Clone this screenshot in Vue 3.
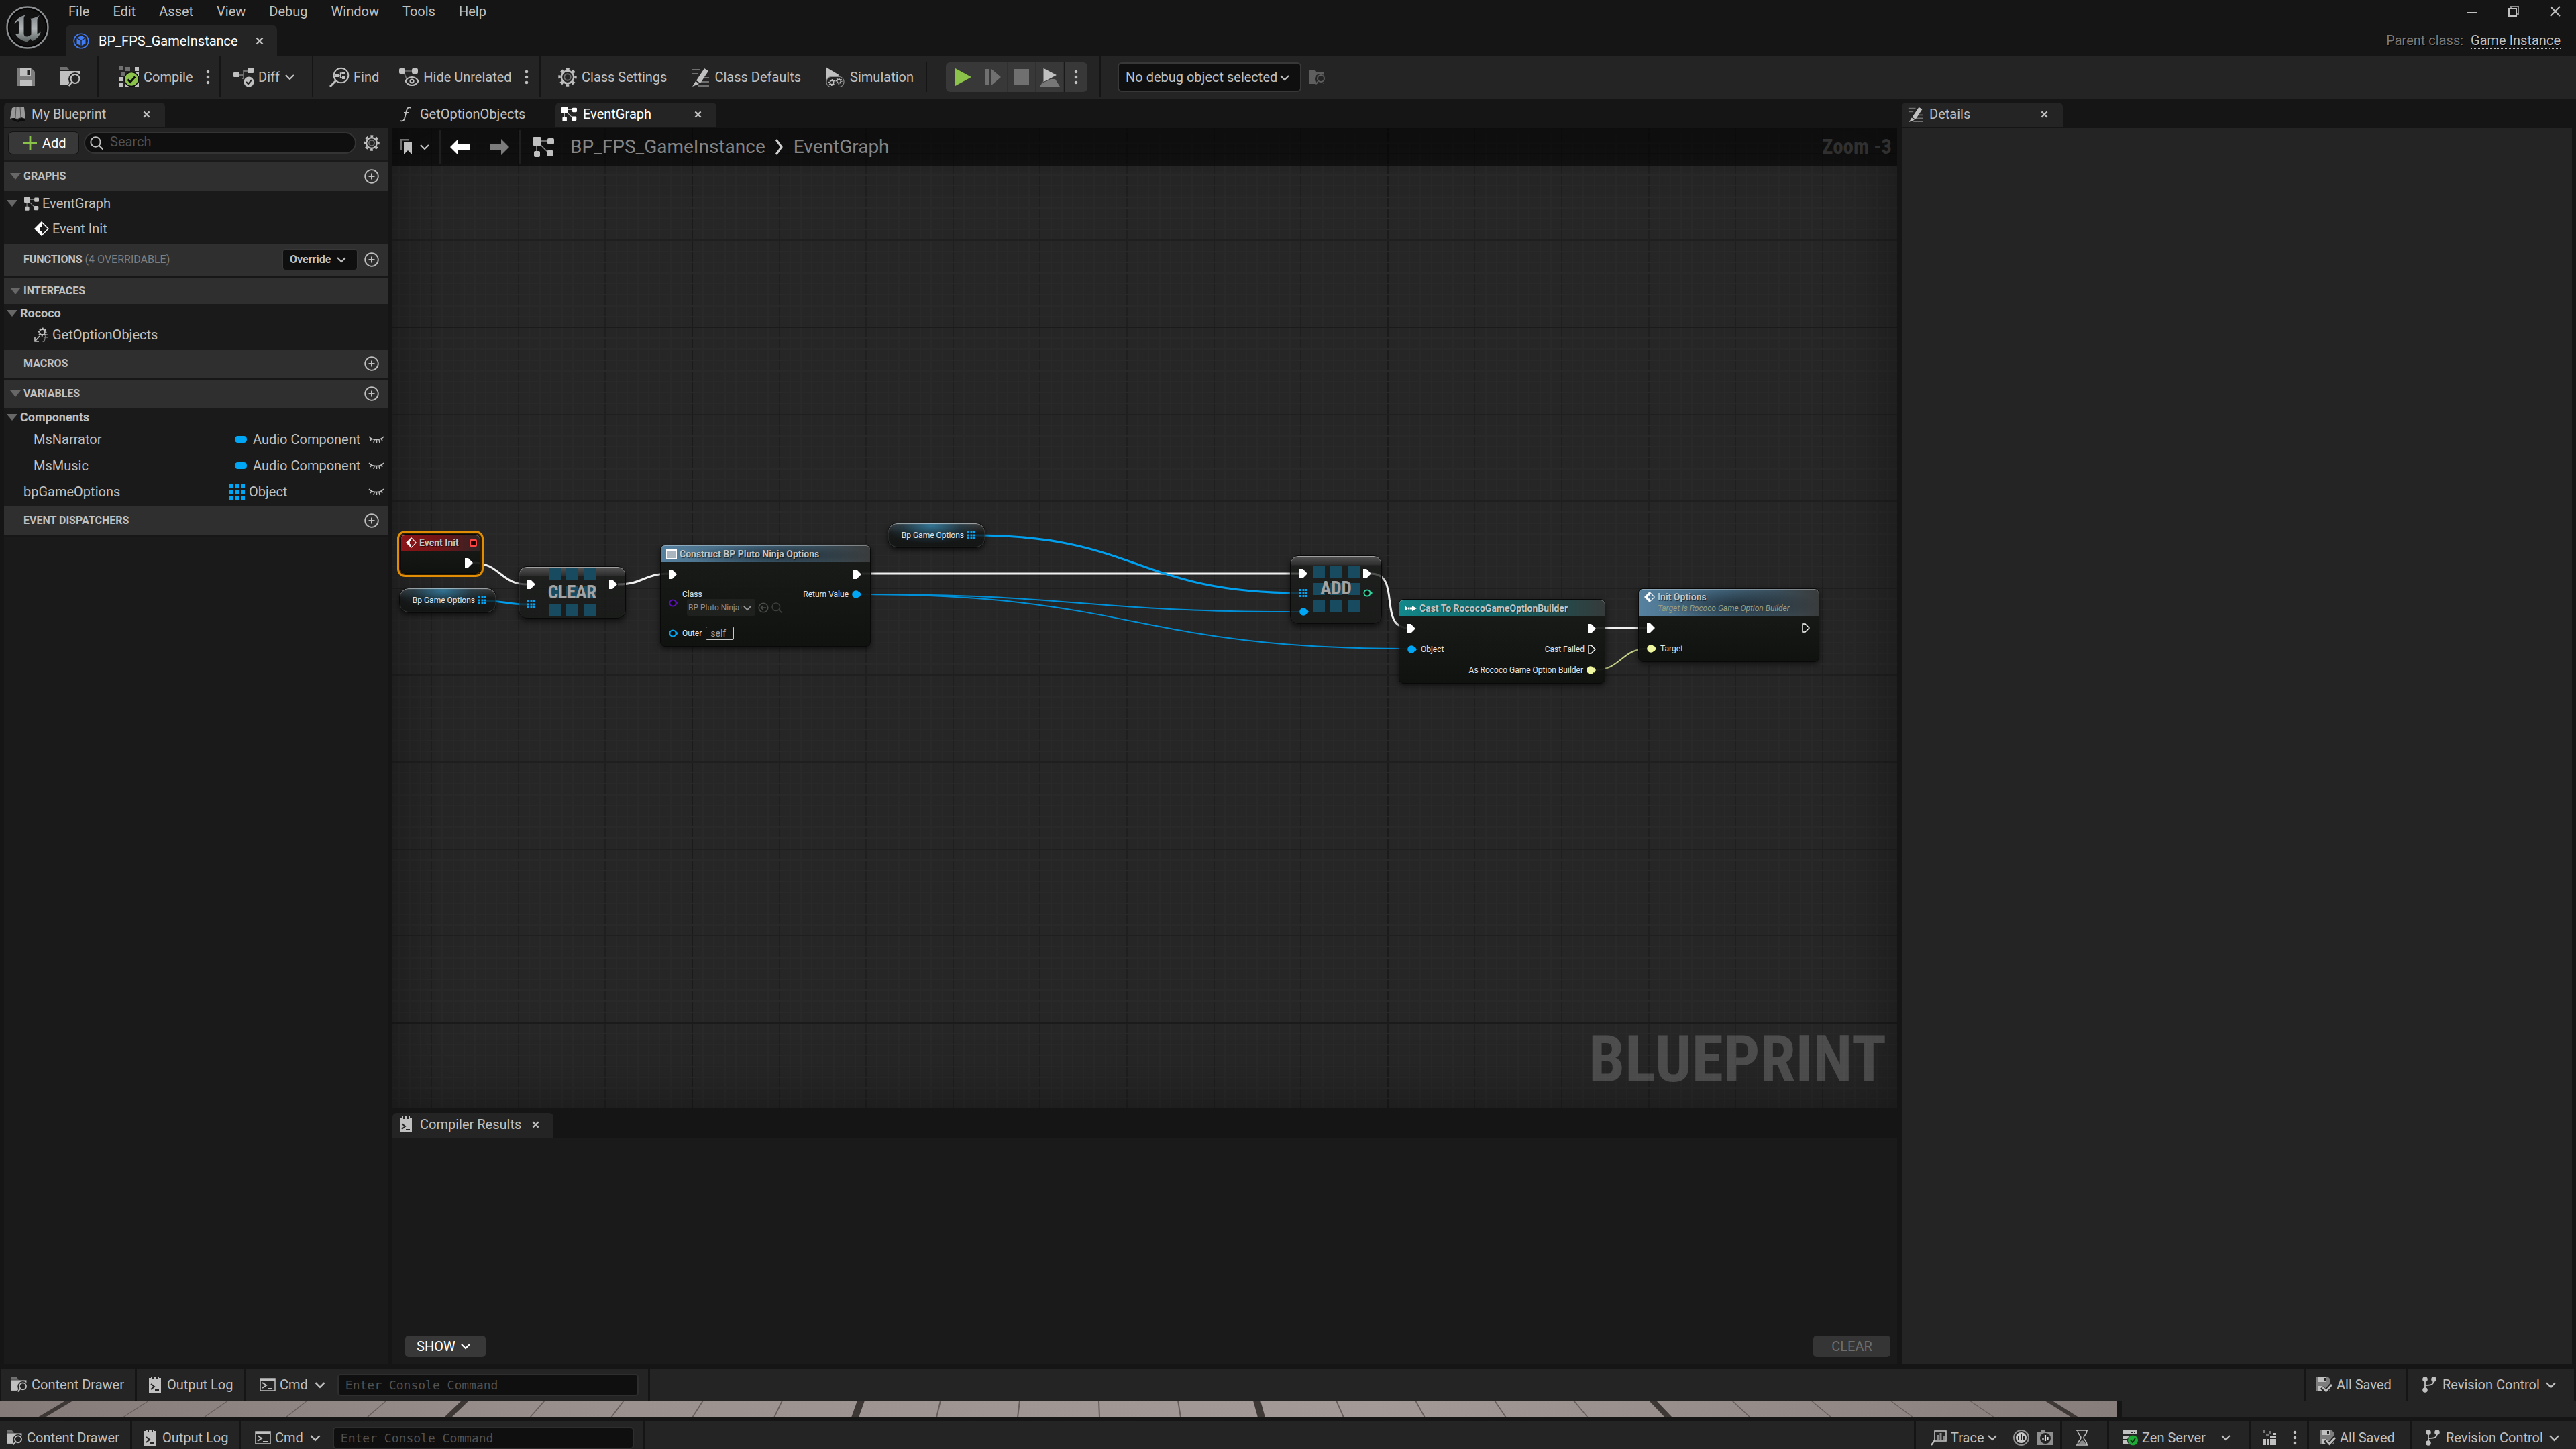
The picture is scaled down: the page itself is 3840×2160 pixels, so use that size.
<script setup>
import { h, ref } from 'vue'

const L = '#c0c0c0'
const D = '#707070'

const gearRing = (cx, cy, r, w, color) => {
  const step = (2 * Math.PI * r) / 16
  return `<circle cx="${cx}" cy="${cy}" r="${r}" fill="none" stroke="${color}" stroke-width="${w}" stroke-dasharray="${step} ${step}" stroke-dashoffset="${step / 2}"/>`
}

// Each entry: [width, height, markup]
const icons = {
  logo: [64, 64, `<defs><linearGradient id="lg" x1="0" y1="0" x2="0" y2="1"><stop offset="0" stop-color="#7d8488"/><stop offset=".5" stop-color="#b0b4b6"/><stop offset="1" stop-color="#59605f"/></linearGradient></defs><circle cx="32" cy="32" r="30.5" fill="#121212" stroke="#8d9193" stroke-width="2.4"/><circle cx="32" cy="32" r="28" fill="none" stroke="#050505" stroke-width="2"/><path fill="url(#lg)" d="M12.5 27C15 20 20 15.5 29.5 13.5C27.5 14.8 26.5 16.5 26.5 19V41C26.5 44 28.5 45.5 31 45.5C33.5 45.5 36 44 37.5 42.5V22C37.5 20.5 37 19.8 35.5 19C40 18.5 45 17 50 14C47.5 17 46.5 19 46.5 22.5V41C48 41 50 40 52 37.5C50 45 46 49 39.5 52L36.5 49L31.5 53.5C24 52 17 47.5 14 41.5C16.5 42.5 19 42 19 39.5V24.5C19 22 16.5 22.5 12.5 27Z"/>`],
  cube: [24, 24, `<circle cx="12" cy="12" r="10.8" fill="none" stroke="#3f7cf5" stroke-width="1.6"/><path fill="#3f7cf5" d="M12 4l6 3.2-6 3.2-6-3.2zM5.5 8.3l5.8 3.1v7.6l-5.8-3.2zM18.5 8.3l-5.8 3.1v7.6l5.8-3.2z"/>`],
  close: [12, 12, `<path d="M1.5 1.5l9 9M10.5 1.5l-9 9" stroke="${L}" stroke-width="2.4"/>`],
  winMin: [16, 16, `<path d="M1 10h14" stroke="${L}" stroke-width="2"/>`],
  winMax: [16, 16, `<path d="M4 3V1h11v11h-3" stroke="#8f8f8f" stroke-width="2" fill="none"/><rect x="1" y="4" width="11" height="11" fill="none" stroke="${L}" stroke-width="2"/>`],
  winClose: [16, 16, `<path d="M1 1l14 14M15 1L1 15" stroke="${L}" stroke-width="2"/>`],
  save: [28, 28, `<path d="M1 1h21l5 5v21H1z" fill="#7d7d7d"/><path d="M5 1h16v12H5zM5 18h18v9H5z" fill="${L}"/><path d="M15.5 3h4v8h-4z" fill="#242424"/>`],
  browse: [31, 31, `<path d="M0 6V1h10l4 5z" fill="${D}"/><path d="M0 7h29v20H0z" fill="${L}"/><circle cx="22" cy="19" r="10" fill="#242424"/><path d="M14 24l-6 7h23V12z" fill="#242424"/><circle cx="22" cy="18.5" r="6.5" fill="none" stroke="${L}" stroke-width="2.2"/><path d="M17.5 23l-5 6" stroke="${L}" stroke-width="2.6"/>`],
  browseDim: [24, 24, `<path d="M0 1h8l3 4h11v17H0z" fill="#5e5e5e"/><circle cx="17" cy="15" r="8" fill="#242424"/><circle cx="18" cy="14" r="5" fill="none" stroke="#5e5e5e" stroke-width="2"/><path d="M14 18l-4 5" stroke="#5e5e5e" stroke-width="2"/>`],
  compile: [31, 31, `<path fill="${D}" d="M0 0h6v6H0zM10 1h7v6h-7zM3 9h6v6H3zM12 9h6v6h-6z"/><path fill="${L}" d="M24 1h6v6h-6zM24 9h6v6h-6zM1 16h6v6H1zM1 24h6v6H1zM9 24h7v6H9zM24 24h6v6h-6z"/><circle cx="19" cy="19" r="10.5" fill="#8bc34a" stroke="#0c0c0c" stroke-width="1.4"/><path d="M13.5 19.5l3.8 4 7-8" fill="none" stroke="#0c0c0c" stroke-width="2.8"/>`],
  dots: [6, 24, `<circle cx="3" cy="4" r="2.3" fill="${L}"/><circle cx="3" cy="12" r="2.3" fill="${L}"/><circle cx="3" cy="20" r="2.3" fill="${L}"/>`],
  chevron: [14, 10, `<path d="M1 2l6 6 6-6" fill="none" stroke="currentColor" stroke-width="2.2"/>`],
  diff: [31, 30, `<path d="M9 12h6V6h8M15 10v7h-2" fill="none" stroke="${D}" stroke-width="1.8"/><rect x="0" y="8" width="9" height="7" rx="1" fill="${L}"/><rect x="21" y="1" width="9" height="8" rx="1" fill="${L}"/><circle cx="23" cy="22" r="7.6" fill="${L}"/><path d="M19 22l3 3.2 5-6" fill="none" stroke="#242424" stroke-width="2.2"/>`],
  find: [30, 30, `<circle cx="17.5" cy="12.5" r="10.8" fill="none" stroke="${L}" stroke-width="2"/><path d="M9.5 20.5L1 29" stroke="${L}" stroke-width="3"/><path fill="${L}" d="M9 11h5v4H9zM19 7h5v4h-5zM19 14h5v4h-5z"/><path d="M14 13h2M19 9h-2.5v7H19" stroke="${L}" fill="none" stroke-width="1.4"/>`],
  hide: [30, 30, `<path d="M8 6h13M7 8l6 14" stroke="${D}" stroke-width="1.6"/><rect x="0" y="2" width="9" height="8" rx="2" fill="${L}"/><rect x="19" y="2" width="9" height="8" rx="2" fill="${L}"/><path d="M9.5 21c4-8 15-8 19 0c-4 8-15 8-19 0z" fill="#242424" stroke="${L}" stroke-width="2"/><circle cx="19" cy="21" r="3.6" fill="${L}"/><circle cx="19" cy="21" r="1.3" fill="#242424"/>`],
  gear: [28, 28, `${gearRing(14, 14, 12, 3.4, L)}<circle cx="14" cy="14" r="9.2" fill="none" stroke="${L}" stroke-width="2.6"/><circle cx="14" cy="14" r="4.8" fill="none" stroke="${D}" stroke-width="2"/>`],
  edit: [28, 28, `<path d="M1 3h13M2 9h8M20 15h7M15 21h12M10 27h17" stroke="${D}" stroke-width="2"/><path d="M20 1l6 4-12 18-6-4zM7 20l5 4-10 4z" fill="${L}"/>`],
  sim: [30, 30, `<path d="M1 0l20 12L1 23z" fill="${L}"/><rect x="2" y="14.5" width="26" height="15" rx="7" fill="#242424" stroke="#8a8a8a" stroke-width="1.2"/>${gearRing(10, 23, 4, 2, L)}<circle cx="10" cy="23" r="2.8" fill="none" stroke="${L}" stroke-width="1.4"/>${gearRing(20.5, 21, 4, 2, L)}<circle cx="20.5" cy="21" r="2.8" fill="none" stroke="${L}" stroke-width="1.4"/>`],
  play: [24, 26, '<path d="M0 0l24 13L0 26z" fill="#8bc34a"/>'],
  step: [24, 24, `<path d="M0 0h5v24H0zM9 0l14 12L9 24z" fill="${D}"/>`],
  stop: [22, 24, `<path d="M0 0h22v24H0z" fill="${D}"/>`],
  eject: [30, 28, `<path d="M0 28l5-8h5l6-3h7l7 11z" fill="#777"/><path d="M5 0l21 11L5 22z" fill="${L}" stroke="#383838" stroke-width="1"/>`],
  book: [24, 24, '<path d="M3 3l6-2 6 1 6 0 2 17-6-2-6 2-7-1-4 1z" fill="#9a9a9a"/><path d="M9 1l-1 17M15 2l1 16" stroke="#555" stroke-width="1"/><path d="M0 19l7-1 4 4 6-4 6 2v3l-6-1-5 2-6-2z" fill="#0c0c0c"/>'],
  func: [16, 24, `<path d="M15 3c-3-2-5 0-6 4L6 19c-1 3-3 4-6 3M5 10h8" fill="none" stroke="${L}" stroke-width="1.8"/>`],
  graph: [32, 30, `<path d="M9 6h16M6 10v14M9 9l16 16" stroke="currentColor" stroke-width="1.6" opacity=".7"/><rect x="0" y="0" width="13" height="13" rx="2" fill="currentColor"/><rect x="22" y="2" width="10" height="9" rx="2" fill="currentColor"/><rect x="2" y="21" width="9" height="9" rx="2" fill="currentColor"/><rect x="21" y="20" width="10" height="9" rx="2" fill="currentColor"/>`],
  plus: [20, 20, '<path d="M10 0v20M0 10h20" stroke="#8bc34a" stroke-width="2.8"/>'],
  search: [20, 20, `<circle cx="8.5" cy="8.5" r="7.2" fill="none" stroke="currentColor" stroke-width="2"/><path d="M13.5 13.5l6 6" stroke="currentColor" stroke-width="2.2"/>`],
  marks: [18, 24, `<path d="M1 17V1h12" fill="none" stroke="${D}" stroke-width="3"/><path d="M5 4h12v19l-6-6-6 6z" fill="${L}"/>`],
  back: [29, 24, '<path d="M0 12L12 0v7h17v10H12v7z" fill="currentColor"/>'],
  fwd: [29, 24, '<path d="M29 12L17 0v7H0v10h17v7z" fill="currentColor"/>'],
  crumb: [14, 24, `<path d="M2 1l8 11-8 11" fill="none" stroke="#d0d0d0" stroke-width="3"/>`],
  add: [22, 22, `<circle cx="11" cy="11" r="9.8" fill="none" stroke="${L}" stroke-width="1.8"/><path d="M11 6.5v9M6.5 11h9" stroke="${L}" stroke-width="2"/>`],
  tri: [16, 10, '<path d="M0 0h16L8 10z" fill="#676767"/>'],
  event: [22, 22, '<path d="M11 1l10 10-10 10L1 11z" fill="none" stroke="#fff" stroke-width="1.5"/><path d="M11 1v7H8v6h3v7L1 11z" fill="#fff"/>'],
  iface: [22, 22, `${gearRing(12, 7, 5.5, 2, L)}<circle cx="12" cy="7" r="4" fill="none" stroke="${L}" stroke-width="1.8"/><path d="M8 13l-6 7M1 15v6h6" fill="none" stroke="${L}" stroke-width="1.6"/><path d="M20 11c-2-1-3 0-3.5 3l-1 5c0 2-1 3-3 2M14 15h6" fill="none" stroke="#777" stroke-width="1.3"/>`],
  pill: [18, 10, '<rect width="18" height="10" rx="4.5" fill="#00a6f6"/>'],
  array: [24, 24, '<path fill="#00a6f6" d="M0 0h6v6H0zM9 0h6v6H9zM18 0h6v6h-6zM0 9h6v6H0zM9 9h6v6H9zM18 9h6v6h-6zM0 18h6v6H0zM9 18h6v6H9zM18 18h6v6h-6z"/>'],
  eye: [24, 14, `<path d="M1 3c5 6 17 6 22 0M5 6l-2 3M9 8l-1 4M12.5 8v4M16 8l1 4M19 6l2 3" fill="none" stroke="${L}" stroke-width="1.5"/>`],
  log: [18, 24, `<path d="M0 2h3V0h2v4h2V0h4v4h2V0h2v2h3v22H0z" fill="${L}"/><path d="M3 11l5 4-5 4M9 20h6" fill="none" stroke="#242424" stroke-width="2"/>`],
  term: [24, 20, `<rect x="1" y="1" width="22" height="18" fill="none" stroke="${L}" stroke-width="1.5"/><path d="M1 1h22v3H1z" fill="${L}"/><path d="M4 7l6 4-6 4M12 16h7" fill="none" stroke="${L}" stroke-width="2"/>`],
  saved: [24, 24, `<path d="M0 0h17l4 4v18H0z" fill="#7d7d7d"/><path d="M3 0h12v8H3zM3 14h8v7H3z" fill="${L}"/><path d="M11 2h3v4h-3z" fill="#242424"/><path d="M8 16l6 6 11-13" fill="none" stroke="#242424" stroke-width="6"/><path d="M9.5 16l5 5.5L23 12" fill="none" stroke="${L}" stroke-width="2.8"/>`],
  branch: [21, 24, `<path d="M4 4v16M17 4c0 8-3 9-13 9" fill="none" stroke="${L}" stroke-width="1.8"/><circle cx="4" cy="4" r="3.8" fill="${L}"/><circle cx="17" cy="4" r="3.8" fill="${L}"/><circle cx="4" cy="20" r="3.8" fill="${L}"/>`],
  trace: [24, 24, `<rect x="5" y="2" width="17" height="15" fill="none" stroke="${L}" stroke-width="1.6"/><path d="M5 16l-5 7" stroke="${L}" stroke-width="2.2"/><path d="M8 15V8h3v7zM12.5 15V5h3v10zM17 15v-5h3v5z" fill="#8a8a8a"/>`],
  traceRec: [24, 24, '<circle cx="12" cy="12" r="11" fill="#242424" stroke="#8f8f8f" stroke-width="2"/><circle cx="12" cy="12" r="8" fill="#c8c8c8"/><path d="M8 10v5M12 7v9M16 10v5" stroke="#242424" stroke-width="2"/>'],
  traceCam: [24, 24, '<path d="M0 4h5V1h6v3h13v19H0z" fill="#8f8f8f"/><circle cx="12" cy="13" r="8" fill="#242424"/><path d="M8.5 12v4M12 8v9M15.5 11v5" stroke="#e0e0e0" stroke-width="2.2"/>'],
  glass: [18, 24, `<path d="M0 1h18M0 23h18M2 1c0 7 5 7 5 11s-5 4-5 11M16 1c0 7-5 7-5 11s5 4 5 11" fill="none" stroke="${L}" stroke-width="1.6"/><path d="M4 21c1-3 3-4 5-5 2 1 4 2 5 5z" fill="#8a8a8a"/>`],
  zen: [24, 24, `<path d="M0 1h22v6H0zM0 9h22v5H0zM0 16h22v5H0z" fill="${L}"/><path d="M13 4h2M17 4h2" stroke="#242424" stroke-width="2"/><circle cx="15.5" cy="16" r="8" fill="#1eaa36" stroke="#242424" stroke-width="1"/><path d="M12 16l3 3 4-6" fill="none" stroke="#0e2b12" stroke-width="2"/>`],
  pixels: [22, 22, `<path fill="#777" d="M0 0h4v4H0zM9 1h4v4H9zM5 6h4v3H5z"/><path fill="${L}" d="M16 4h4v3h-4zM11 9h4v3h-4zM16 9h4v3h-4zM1 13h4v4H1zM6 13h4v4H6zM11 13h4v4h-4zM16 13h4v4h-4zM1 18h4v4H1zM6 18h4v4H6zM11 18h4v4h-4zM16 18h4v4h-4z"/>`],
  exec: [12, 14, '<path d="M0 0h5l7 7-7 7H0z" fill="#fff"/>'],
  execOpen: [12, 14, '<path d="M1 1h4l6 6-6 6H1z" fill="none" stroke="#fff" stroke-width="1.4"/>'],
  obj: [14, 12, '<circle cx="6" cy="6" r="5.8" fill="currentColor"/><path d="M11 2l3 4-3 4z" fill="currentColor"/>'],
  objOpen: [14, 12, '<circle cx="6" cy="6" r="4.6" fill="#0b0d0b" stroke="currentColor" stroke-width="2"/><path d="M11 3l3 3-3 3z" fill="currentColor"/>'],
  cast: [18, 10, '<path d="M0 1l5 4-5 4zM11 1l7 4-7 4z" fill="#fff"/><path d="M5 5h6" stroke="#fff" stroke-width="3" stroke-dasharray="1.5 1"/>'],
  page: [16, 15, '<rect x=".5" y=".5" width="15" height="14" fill="#a9b6bf" stroke="#fff" stroke-width="1"/><path d="M0 0h16v4H0z" fill="#fff"/>'],
  goto: [16, 16, '<circle cx="8" cy="8" r="6.8" fill="none" stroke="#4a4b4a" stroke-width="1.6"/><path d="M12 8H5M8 4.5L4.5 8 8 11.5" fill="none" stroke="#4a4b4a" stroke-width="1.6"/>'],
}

const Icon = (props) => {
  const [w, hgt, markup] = icons[props.name]
  const width = Number(props.w || w)
  return h('svg', {
    width,
    height: Math.round((width * hgt) / w),
    viewBox: `0 0 ${w} ${hgt}`,
    'aria-hidden': 'true',
    style: { flex: 'none', display: 'block' },
    innerHTML: markup,
  })
}
Icon.props = ['name', 'w']

const menus = ['File', 'Edit', 'Asset', 'View', 'Debug', 'Window', 'Tools', 'Help']
const search = ref('')

// Graph grid: lines every 16.2 units, a ruled line each 8 cells, a heavy one each 64
const cell = 16.2
const gridLines = (origin, length) =>
  Array.from({ length: Math.ceil((length + 1100) / cell) }, (_, i) => {
    const n = i - 64
    return { pos: Math.round(origin + n * cell), kind: n % 64 === 0 ? 'heavy' : n % 8 === 0 ? 'ruled' : 'fine' }
  }).filter((l) => l.pos > 0 && l.pos < length)
const order = { fine: 0, ruled: 1, heavy: 2 }
const cols = gridLines(446, 3200).sort((a, b) => order[a.kind] - order[b.kind])
const rows = gridLines(296, 2000).sort((a, b) => order[a.kind] - order[b.kind])

const wire = (x1, y1, x2, y2, pull = (x2 - x1) / 2) =>
  `M${x1} ${y1}C${x1 + pull} ${y1} ${x2 - pull} ${y2} ${x2} ${y2}`
const wires = [
  { d: wire(120, 648, 201, 680), kind: 'exec' },
  { d: wire(336, 680, 413, 664), kind: 'exec' },
  { d: wire(700, 664, 1353, 664), kind: 'exec' },
  { d: wire(1458, 664, 1515, 745, 48), kind: 'exec' },
  { d: wire(1793, 745, 1871, 745), kind: 'exec' },
  { d: wire(139, 705, 202, 710), kind: 'array' },
  { d: wire(868, 607, 1353, 693), kind: 'array' },
  { d: wire(698, 695, 1353, 721), kind: 'object' },
  { d: wire(698, 695, 1513, 776), kind: 'object' },
  { d: wire(1792, 808, 1871, 776), kind: 'builder' },
]

const at = (x, y, w) => ({ left: x + 'px', top: y + 'px', width: w + 'px' })

const variables = [
  { name: 'MsNarrator', type: 'Audio Component', icon: 'pill', nested: true },
  { name: 'MsMusic', type: 'Audio Component', icon: 'pill', nested: true },
  { name: 'bpGameOptions', type: 'Object', icon: 'array', nested: false },
]

// Floor tile seams fan out from a vanishing point above the middle of the strip
const lean = (x) => Math.round(x + (x - 1610) * 0.028)
const seams = Array.from({ length: 28 }, (_, i) => {
  const thick = i % 5 === 1
  const w = thick ? 11 : 2
  const x = -14 + i * 118 - (thick ? 6 : 1)
  return { id: i, thick, points: `${x},0 ${x + w},0 ${lean(x) + w},25 ${lean(x)},25` }
})
const bars = ['front', 'back']
</script>

<template>
  <div class="app">
    <header class="titlebar">
      <Icon name="logo" class="logo" />
      <div class="titles">
        <nav class="menu">
          <button v-for="m in menus" :key="m">{{ m }}</button>
        </nav>
        <div class="doctab">
          <Icon name="cube" />
          <span>BP_FPS_GameInstance</span>
          <button aria-label="Close tab"><Icon name="close" /></button>
        </div>
      </div>
      <div class="titleright">
        <div class="winbtns">
          <button aria-label="Minimize"><Icon name="winMin" /></button>
          <button aria-label="Restore"><Icon name="winMax" /></button>
          <button aria-label="Close"><Icon name="winClose" /></button>
        </div>
        <div class="parent">Parent class: <a href="#">Game Instance</a></div>
      </div>
    </header>

    <div class="toolbar">
      <div class="tg g-file">
        <button aria-label="Save"><Icon name="save" /></button>
        <button aria-label="Browse"><Icon name="browse" /></button>
      </div>
      <div class="tg g-compile">
        <button><Icon name="compile" />Compile</button>
        <button aria-label="Compile options"><Icon name="dots" /></button>
      </div>
      <div class="tg g-diff">
        <button><Icon name="diff" />Diff<Icon name="chevron" class="gapl" /></button>
      </div>
      <div class="tg g-find">
        <button><Icon name="find" />Find</button>
        <button class="hide"><Icon name="hide" />Hide Unrelated</button>
        <button aria-label="Hide options"><Icon name="dots" /></button>
      </div>
      <div class="tg g-class">
        <button><Icon name="gear" />Class Settings</button>
        <button><Icon name="edit" />Class Defaults</button>
        <button><Icon name="sim" />Simulation</button>
      </div>
      <div class="tg g-play">
        <div class="playset">
          <button class="first" aria-label="Play"><Icon name="play" /></button>
          <button aria-label="Step"><Icon name="step" /></button>
          <button aria-label="Stop"><Icon name="stop" /></button>
          <button aria-label="Eject"><Icon name="eject" /></button>
          <button class="more" aria-label="Play options"><Icon name="dots" /></button>
        </div>
      </div>
      <div class="tg g-debug">
        <label class="combo">
          <select aria-label="Debug object"><option>No debug object selected</option></select>
          <Icon name="chevron" class="arrow" />
        </label>
        <button aria-label="Browse debug object"><Icon name="browseDim" /></button>
      </div>
    </div>

    <main class="workspace">
      <aside class="side">
        <div class="tabs">
          <div class="tab on mybp"><Icon name="book" /><span>My Blueprint</span><button aria-label="Close"><Icon name="close" w="11" /></button></div>
        </div>
        <div class="sidebody">
          <div class="sidetools">
            <button class="addbtn"><Icon name="plus" />Add</button>
            <label class="searchbox"><Icon name="search" /><input v-model="search" type="text" placeholder="Search" aria-label="Search" /></label>
            <button aria-label="Settings"><Icon name="gear" w="24" /></button>
          </div>

          <section>
            <h2 class="head"><Icon name="tri" /><span>GRAPHS</span><button aria-label="Add graph"><Icon name="add" /></button></h2>
            <div class="row root"><Icon name="tri" /><Icon name="graph" w="22" class="light" /><span>EventGraph</span></div>
            <div class="row child"><Icon name="event" /><span>Event Init</span></div>
          </section>
          <section>
            <h2 class="head tall notri"><span>FUNCTIONS <small>(4 OVERRIDABLE)</small></span><button class="override">Override<Icon name="chevron" /></button><button class="plusbtn" aria-label="Add function"><Icon name="add" /></button></h2>
          </section>
          <section>
            <h2 class="head short"><Icon name="tri" /><span>INTERFACES</span></h2>
            <h3 class="cat"><Icon name="tri" />Rococo</h3>
            <div class="row child"><Icon name="iface" /><span>GetOptionObjects</span></div>
          </section>
          <section>
            <h2 class="head notri"><span>MACROS</span><button aria-label="Add macro"><Icon name="add" /></button></h2>
          </section>
          <section>
            <h2 class="head"><Icon name="tri" /><span>VARIABLES</span><button aria-label="Add variable"><Icon name="add" /></button></h2>
            <h3 class="cat"><Icon name="tri" />Components</h3>
            <div v-for="v in variables" :key="v.name" class="row var" :class="{ nested: v.nested }">
              <span class="vname">{{ v.name }}</span>
              <span class="vtype" :class="v.icon"><Icon :name="v.icon" />{{ v.type }}</span>
              <button aria-label="Toggle visibility"><Icon name="eye" /></button>
            </div>
          </section>
          <section>
            <h2 class="head notri"><span>EVENT DISPATCHERS</span><button aria-label="Add dispatcher"><Icon name="add" /></button></h2>
          </section>
        </div>
      </aside>

      <div class="center">
        <div class="tabs">
          <div class="tab off"><Icon name="func" /><span>GetOptionObjects</span></div>
          <div class="tab on active"><Icon name="graph" w="23" /><span>EventGraph</span><button aria-label="Close"><Icon name="close" w="11" /></button></div>
        </div>
        <div class="graph">
          <svg class="backdrop" aria-hidden="true">
            <rect v-for="c in cols" :key="'c' + c.pos" :x="c.pos" y="0" width="2" height="100%" :class="c.kind" />
            <rect v-for="r in rows" :key="'r' + r.pos" x="0" :y="r.pos" width="100%" height="2" :class="r.kind" />
            <path v-for="w in wires" :key="w.d" :d="w.d" class="wire" :class="w.kind" />
          </svg>
          <div class="vignette"></div>

          <div class="crumbs">
            <button class="marks" aria-label="Bookmarks"><Icon name="marks" /><Icon name="chevron" /></button>
            <div class="nav">
              <button class="white" aria-label="Back"><Icon name="back" /></button>
              <button class="dim" aria-label="Forward"><Icon name="fwd" /></button>
            </div>
            <div class="path">
              <Icon name="graph" class="light" /><a href="#">BP_FPS_GameInstance</a><Icon name="crumb" /><a href="#">EventGraph</a>
            </div>
            <span class="zoom">Zoom -3</span>
          </div>

          <article class="node selected" :style="at(12, 605, 119)">
            <header class="h-red"><Icon name="event" w="16" /><b>Event Init</b><i class="delegate"></i></header>
            <div class="pins"><div class="pin"><span></span><Icon name="exec" /></div></div>
          </article>

          <article class="node varnode" :style="at(10, 685, 145)"><span>Bp Game Options</span><Icon name="array" w="12" /></article>
          <article class="node varnode" :style="at(738, 588, 146)"><span>Bp Game Options</span><Icon name="array" w="12" /></article>

          <article class="node compact clear" :style="at(188, 653, 160)">
            <div class="tiles"><i v-for="n in 9" :key="n"></i></div>
            <strong>CLEAR</strong>
            <div class="cpins"><Icon name="exec" /><Icon name="array" w="12" /></div>
            <div class="cpins"><Icon name="exec" /></div>
          </article>

          <article class="node" :style="at(399, 621, 314)">
            <header class="h-blue"><Icon name="page" /><b>Construct BP Pluto Ninja Options</b></header>
            <div class="pins">
              <div class="pin"><Icon name="exec" /><Icon name="exec" /></div>
              <div class="classpin">
                <Icon name="objOpen" class="purple" />
                <div class="classcol">
                  <label for="cls">Class</label>
                  <div class="pick">
                    <span class="pickbox"><select id="cls"><option>BP Pluto Ninja Options</option></select><Icon name="chevron" w="12" class="arrow" /></span>
                    <button aria-label="Use selected"><Icon name="goto" /></button><button aria-label="Browse" class="mag"><Icon name="search" w="16" /></button>
                  </div>
                </div>
                <div class="out"><span>Return Value</span><Icon name="obj" class="blue" /></div>
              </div>
              <div class="pin"><label class="in"><Icon name="objOpen" class="blue" /><span>Outer</span><input class="self" type="text" value="self" /></label></div>
            </div>
          </article>

          <article class="node compact addnode" :style="at(1338, 637, 137)">
            <div class="tiles"><i v-for="n in 9" :key="n"></i></div>
            <strong>ADD</strong>
            <div class="cpins"><Icon name="exec" /><Icon name="array" w="12" /><Icon name="obj" class="blue" /></div>
            <div class="cpins"><Icon name="exec" /><Icon name="objOpen" class="green" /></div>
          </article>

          <article class="node" :style="at(1500, 702, 308)">
            <header class="h-teal"><Icon name="cast" /><b>Cast To RococoGameOptionBuilder</b></header>
            <div class="pins">
              <div class="pin"><Icon name="exec" /><Icon name="exec" /></div>
              <div class="pin"><span class="in"><Icon name="obj" class="blue" /><span>Object</span></span><span class="out"><span>Cast Failed</span><Icon name="execOpen" /></span></div>
              <div class="pin"><span></span><span class="out"><span>As Rococo Game Option Builder</span><Icon name="obj" class="lime" /></span></div>
            </div>
          </article>

          <article class="node" :style="at(1857, 686, 270)">
            <header class="h-blue two"><Icon name="event" w="16" /><div><b>Init Options</b><em>Target is Rococo Game Option Builder</em></div></header>
            <div class="pins">
              <div class="pin"><Icon name="exec" /><Icon name="execOpen" /></div>
              <div class="pin"><span class="in"><Icon name="obj" class="lime" /><span>Target</span></span></div>
            </div>
          </article>

          <div class="watermark">BLUEPRINT</div>
        </div>

        <div class="tabs results">
          <div class="tab on compiler"><Icon name="log" /><span>Compiler Results</span><button aria-label="Close"><Icon name="close" w="11" /></button></div>
        </div>
        <div class="output">
          <button class="show">SHOW<Icon name="chevron" /></button>
          <button class="clearbtn" disabled>CLEAR</button>
        </div>
      </div>

      <aside class="details">
        <div class="tabs">
          <div class="tab on detailtab"><Icon name="edit" w="23" /><span>Details</span><button aria-label="Close"><Icon name="close" w="11" /></button></div>
        </div>
        <div class="detailbody"></div>
      </aside>
    </main>

    <template v-for="bar in bars" :key="bar">
      <div v-if="bar === 'back'" class="behind">
        <svg viewBox="0 0 3156 25" preserveAspectRatio="xMinYMin slice" aria-hidden="true">
          <defs>
            <linearGradient id="floor"><stop offset="0" stop-color="#857b78" /><stop offset=".3" stop-color="#9b918e" /><stop offset=".65" stop-color="#a39996" /><stop offset="1" stop-color="#877d7a" /></linearGradient>
          </defs>
          <rect width="3156" height="25" fill="url(#floor)" />
          <polygon v-for="s in seams" :key="s.id" :points="s.points" :class="s.thick ? 'thick' : 'thin'" />
        </svg>
        <div class="rest"></div>
      </div>
      <footer class="status" :class="bar">
        <div class="sb drawer"><button><Icon name="browse" w="24" />Content Drawer</button></div>
        <div class="sb log"><button><Icon name="log" />Output Log</button></div>
        <div class="sb cmd">
          <button><Icon name="term" />Cmd<Icon name="chevron" w="16" /></button>
          <input type="text" placeholder="Enter Console Command" aria-label="Console command" />
        </div>
        <div class="fill"></div>
        <template v-if="bar === 'back'">
          <div class="sb trace"><button><Icon name="trace" />Trace<Icon name="chevron" /></button><button aria-label="Record trace"><Icon name="traceRec" /></button><button aria-label="Trace snapshot"><Icon name="traceCam" /></button></div>
          <div class="sb glass"><button aria-label="Pending work"><Icon name="glass" /></button></div>
          <div class="sb zen"><button><Icon name="zen" />Zen Server<Icon name="chevron" /></button></div>
          <div class="sb px"><button aria-label="Derived data"><Icon name="pixels" /></button><button aria-label="More"><Icon name="dots" /></button></div>
        </template>
        <div class="sb saved"><button><Icon name="saved" />All Saved</button></div>
        <div class="sb rev"><button><Icon name="branch" />Revision Control<Icon name="chevron" w="15" /></button></div>
      </footer>
    </template>
  </div>
</template>

<style>
body { background: #151515; overflow: hidden; }
</style>

<style scoped>
.app {
  display: flex;
  flex-direction: column;
  height: 100vh;
  overflow: hidden;
  background: #151515;
  color: #c0c0c0;
  font: 20px/24px Roboto, sans-serif;
}
button, input, select { font: inherit; color: inherit; margin: 0; }
button { background: none; border: 0; padding: 0; display: flex; align-items: center; white-space: nowrap; }
input::placeholder { color: #515151; opacity: 1; }
select { appearance: none; border: 0; background: none; outline: none; }
h2, h3 { margin: 0; }

/* Title bar */
.titlebar { display: flex; height: 84px; flex: none; }
.logo { margin: 9px 0 0 9px; }
.titles { margin-left: 25px; display: flex; flex-direction: column; }
.menu { display: flex; gap: 35px; height: 38px; padding: 5px 0 0 4px; box-sizing: border-box; align-items: flex-start; }
.doctab { display: flex; align-items: center; width: 315px; height: 46px; box-sizing: border-box; padding: 0 20px 0 11px; background: #242424; border-radius: 6px 6px 0 0; color: #fff; }
.doctab span { margin-left: 14px; flex: 1; }
.titleright { margin-left: auto; padding-right: 23px; display: flex; flex-direction: column; align-items: flex-end; }
.winbtns { display: flex; gap: 46px; padding-top: 9px; height: 38px; box-sizing: border-box; align-items: flex-start; }
.parent { padding-top: 10px; color: #7b7b7b; text-shadow: 1px 1px 0 #000; }
.parent a { color: #c0c0c0; text-decoration: none; border-bottom: 1px dotted #c0c0c0; margin-left: 6px; }

/* Toolbar */
.toolbar { display: flex; height: 63px; flex: none; background: #242424; margin-bottom: 6px; }
.tg { display: flex; align-items: center; box-sizing: border-box; height: 61px; border-right: 2px solid #151515; flex: none; }
.tg button { gap: 6px; }
.g-file { width: 147px; padding-left: 25px; gap: 37px; }
.g-compile { width: 182px; padding-left: 30px; }
.g-compile button + button { margin-left: auto; margin-right: 14px; }
.g-diff { width: 138px; padding-left: 19px; }
.g-diff .gapl { margin-left: 2px; }
.g-find { width: 339px; padding-left: 24px; }
.hide { margin-left: 30px; }
.hide + button { margin-left: auto; margin-right: 16px; }
.g-class { width: 576px; padding: 0 18px 0 26px; justify-content: space-between; height: 44px; margin-top: 9px; }
.g-class button { gap: 7px; }
.g-play { width: 259px; padding-left: 28px; }
.playset { display: flex; width: 211px; height: 44px; background: #383838; border-radius: 6px; overflow: hidden; }
.playset button { width: 42px; justify-content: center; border-right: 1px solid #303030; flex: none; }
.playset .first { width: 50px; padding-left: 3px; }
.playset .more { width: 34px; border-left: 1px solid #1a1a1a; border-right: 0; }
.g-debug { border: 0; padding-left: 25px; gap: 11px; }
.combo { position: relative; display: flex; }
.combo select { width: 274px; height: 44px; background: #0f0f0f; border: 2px solid #383838; border-radius: 6px; padding: 0 10px; }
.arrow { position: absolute; right: 18px; top: 18px; pointer-events: none; }

/* Panels and tabs */
.workspace { display: flex; flex: 1; min-height: 0; padding: 0 6px; margin-bottom: 6px; gap: 7px; }
.side { width: 572px; flex: none; display: flex; flex-direction: column; }
.center { flex: 1; min-width: 0; display: flex; flex-direction: column; }
.details { width: 999px; flex: none; display: flex; flex-direction: column; }
.tabs { display: flex; height: 37px; margin-bottom: 1px; flex: none; }
.results { margin-top: 8px; }
.tab { display: flex; align-items: center; box-sizing: border-box; border-radius: 6px 6px 0 0; padding-bottom: 3px; }
.tab.on { background: #242424; width: 240px; }
.tab button { margin-left: auto; }
.mybp { padding: 0 22px 3px 9px; gap: 8px; }
.tab.off { width: 243px; padding-left: 12px; gap: 13px; }
.tab.active { padding-left: 9px; padding-right: 22px; gap: 9px; color: #fff; border-image: linear-gradient(90deg, #242424, #0e70d6, #242424) 1; border-top: 1px solid; padding-bottom: 4px; }
.detailtab { padding: 0 22px 3px 9px; gap: 9px; }
.compiler { padding: 0 21px 3px 11px; gap: 12px; }
.detailbody { flex: 1; background: #242424; }

.sidebody { flex: 1; background: #1a1a1a; }
.sidetools { display: flex; align-items: center; height: 48px; box-sizing: border-box; padding: 0 12px 4px 7px; background: #242424; margin-bottom: 3px; }
.addbtn { width: 104px; height: 32px; background: #383838; border-radius: 6px; color: #fff; padding-left: 22px; gap: 8px; box-shadow: 0 0 0 1px #141414; }
.searchbox { display: flex; align-items: center; flex: 1; height: 32px; box-sizing: border-box; border: 2px solid #343434; border-radius: 16px; background: #0f0f0f; margin: 0 11px 0 8px; padding-left: 7px; gap: 10px; }
.searchbox input { flex: 1; min-width: 0; border: 0; background: none; outline: none; padding: 0 0 4px; height: 24px; }
.head { display: flex; align-items: center; height: 42px; background: #2f2f2f; font-size: 16px; line-height: 20px; font-weight: 700; padding: 0 13px 0 9px; gap: 4px; }
.head small { font-size: 16px; font-weight: 400; color: #7e7e7e; }
.head button { margin-left: auto; }
.head.notri { padding-left: 29px; }
.head.tall { height: 48px; }
.head.short { height: 39px; }
.head .override { width: 110px; height: 30px; background: #0f0f0f; border-radius: 4px; box-shadow: 0 0 0 1px #383838; padding-left: 10px; gap: 9px; box-sizing: border-box; }
.head .plusbtn { margin-left: 7px; }
section { border-bottom: 3px solid #1a1a1a; }
section:has(.notri) { border-bottom-color: #171717; }
.row { display: flex; align-items: center; height: 38px; }
.root { padding-left: 4px; }
.root .light { margin: 0 5px 0 10px; }
.light { color: #c0c0c0; }
.child { padding-left: 45px; gap: 5px; }
.cat { display: flex; align-items: center; gap: 4px; height: 27px; padding-left: 4px; font-size: 18px; line-height: 22px; font-weight: 700; }
.var { height: 39px; padding-left: 29px; padding-right: 5px; }
.var.nested { padding-left: 44px; }
.vname { flex: 1; }
.vtype { display: flex; align-items: center; width: 199px; }
.vtype.pill { gap: 9px; }
.vtype.array { gap: 6px; width: 208px; }

/* Graph canvas */
.graph { position: relative; flex: 1; min-height: 0; background: #262626; overflow: hidden; }
.backdrop { position: absolute; inset: 0; width: 100%; height: 100%; }
.fine { fill: #292929; }
.ruled { fill: #1f1f1f; }
.heavy { fill: #1b1b1b; }
.wire { fill: none; }
.exec { stroke: #f2f2f2; stroke-width: 3; }
.wire.array { stroke: #00a0ee; stroke-width: 3; }
.wire.object { stroke: #0090d8; stroke-width: 2; }
.wire.builder { stroke: #c5cf85; stroke-width: 2; }
.vignette { position: absolute; inset: 0; box-shadow: inset 0 0 90px rgba(0, 0, 0, 0.4); pointer-events: none; }
.crumbs { position: relative; display: flex; align-items: center; height: 57px; box-sizing: border-box; background: rgba(0, 0, 0, 0.55); font-size: 28px; line-height: 32px; color: #858585; padding: 0 8px 2px 12px; }
.crumbs a { color: inherit; text-decoration: none; }
.marks { gap: 11px; width: 61px; height: 50px; border-right: 3px solid #1f1f1f; color: #c0c0c0; }
.nav { display: flex; gap: 30px; padding-left: 13px; width: 119px; box-sizing: border-box; height: 50px; border-right: 3px solid #1f1f1f; }
.white { color: #fff; }
.dim { color: #7c7c7c; }
.path { display: flex; align-items: center; padding-left: 17px; }
.path a:nth-of-type(1) { margin: 0 14px 0 24px; }
.path a:nth-of-type(2) { margin-left: 14px; }
.zoom { margin-left: auto; font: 700 31px/36px "Roboto Condensed", Roboto, sans-serif; color: #303030; }
.watermark { position: absolute; right: 16px; bottom: 16px; font: 700 96px/112px "Roboto Condensed", Roboto, sans-serif; color: rgba(255, 255, 255, 0.18); }

/* Nodes */
.node { position: absolute; box-sizing: border-box; border-radius: 7px; border: 1px solid #090909; background: linear-gradient(rgba(24, 27, 24, 0.9), rgba(14, 17, 14, 0.94)); box-shadow: 0 3px 8px rgba(0, 0, 0, 0.6), inset 0 1px 0 rgba(255, 255, 255, 0.2); font-size: 12px; line-height: 14px; color: #e4e4e4; white-space: nowrap; }
.node header { display: flex; align-items: center; height: 25px; border-radius: 6px 6px 0 0; padding: 0 8px; gap: 4px; color: #c0c4c6; box-shadow: inset 0 1px 0 rgba(255, 255, 255, 0.35); }
.node b { font-size: 14px; line-height: 16px; text-shadow: 1px 1px 1px rgba(0, 0, 0, 0.6); }
.h-red { background: linear-gradient(90deg, #8c1518, #701417 50%, #2e2526); }
.h-blue { background: radial-gradient(ellipse 45% 60% at 55% 60%, rgba(20, 28, 34, 0.65), transparent), linear-gradient(90deg, #56819f, #41647b 45%, #3a4f5c 75%, #3a3c3c); }
.h-teal { background: linear-gradient(90deg, #13888a, #126466 50%, #25494a 80%, #363a3a); }
.node header.two { height: 40px; align-items: flex-start; padding-top: 4px; box-sizing: border-box; }
.two div { display: flex; flex-direction: column; }
.node em { font-size: 12px; line-height: 18px; color: #989f83; }
.selected { box-shadow: 0 0 0 2px #2a1d00, 0 0 0 5px #e08c05; }
.delegate { width: 11px; height: 11px; box-sizing: border-box; border: 2px solid #ff4444; border-radius: 2px; background: #200; margin-left: auto; }
.pins { padding: 2px 13px 4px 12px; }
.node.selected header { height: 24px; padding: 0 4px 0 7px; }
.selected .pins { padding: 2px 10px 0; }
.pin { display: flex; align-items: center; justify-content: space-between; height: 31px; }
.in, .out { display: flex; align-items: center; gap: 6px; }
.out { gap: 5px; }
.blue { color: #00a6f6; }
.purple { color: #5a0fb4; }
.green { color: #2fd39b; }
.lime { color: #eef7a0; }
.classpin { display: flex; align-items: center; margin: 8px 0 10px; gap: 6px; }
.classcol { display: flex; flex-direction: column; flex: 1; }
.pick { display: flex; align-items: center; gap: 4px; padding-left: 7px; }
.pick button { color: #3c3d3c; }
.pickbox { position: relative; display: flex; }
.pickbox select { width: 102px; height: 25px; background: #1f211f; border-radius: 3px; color: #8f8f8f; padding: 0 20px 0 2px; overflow: hidden; text-overflow: clip; }
.pickbox .arrow { right: 6px; top: 9px; color: #999; }
.classpin .out { align-self: flex-start; }
.self { width: 42px; height: 20px; box-sizing: border-box; border: 1px solid #c8c8c8; border-radius: 2px; background: none; padding: 0 6px; font-size: 14px; color: #a0a0a0; }
.varnode { height: 38px; border-radius: 14px; display: flex; align-items: center; justify-content: flex-end; gap: 5px; padding-right: 14px; background: radial-gradient(ellipse 50% 75% at 45% 10%, rgba(48, 130, 170, 0.8), rgba(30, 70, 90, 0.45) 60%, transparent), linear-gradient(rgba(80, 80, 80, 0.6), rgba(20, 22, 22, 0.75) 40%, rgba(14, 16, 16, 0.8)); box-shadow: 0 3px 7px rgba(0, 0, 0, 0.6), inset 0 1px 1px rgba(255, 255, 255, 0.55), inset 0 -1px 1px rgba(255, 255, 255, 0.2); }
.compact { display: flex; justify-content: space-between; border-radius: 12px; background: linear-gradient(rgba(95, 95, 95, 0.8), rgba(48, 48, 48, 0.75) 13px, rgba(26, 28, 26, 0.75) 14px, rgba(22, 24, 22, 0.75)); box-shadow: 0 4px 8px rgba(0, 0, 0, 0.6), inset 0 1px 1px rgba(255, 255, 255, 0.5); padding: 0 12px; }
.clear { height: 78px; }
.addnode { height: 102px; padding: 0 13px; }
.tiles { position: absolute; inset: 0; display: grid; grid-template-columns: repeat(3, 18px); grid-auto-rows: 18px; gap: 8px; place-content: center; }
.clear .tiles { row-gap: 9px; }
.addnode .tiles { padding-bottom: 2px; }
.tiles i { background: #194b60; }
.compact strong { position: absolute; inset: 0; display: flex; align-items: center; justify-content: center; font: 700 27px/32px "Roboto Condensed", Roboto, sans-serif; color: #a3a3a3; }
.addnode strong { padding-bottom: 4px; }
.cpins { position: relative; display: flex; flex-direction: column; gap: 17px; padding-top: 19px; }
.addnode .cpins { gap: 16px; }

/* Compiler output */
.output { height: 337px; flex: none; background: #1a1a1a; display: flex; align-items: flex-end; justify-content: space-between; padding: 0 10px 11px 19px; box-sizing: border-box; }
.show { width: 120px; height: 32px; background: #383838; border-radius: 5px; color: #fff; padding-left: 17px; gap: 8px; }
.clearbtn { width: 115px; height: 32px; background: #353535; border-radius: 5px; color: #6e6e6e; justify-content: center; }

/* Status bars */
.status { display: flex; height: 48px; flex: none; background: #242424; overflow: hidden; }
.front { border-left: 2px solid #151515; border-right: 3px solid #151515; }
.status.back { height: 41px; }
.sb { display: flex; align-items: center; box-sizing: border-box; height: 48px; flex: none; }
.sb button { gap: 6px; }
.drawer { width: 202px; padding-left: 15px; border-right: 3px solid #151515; }
.back .drawer { width: 197px; padding-left: 10px; }
.log { width: 162px; padding-left: 18px; border-right: 3px solid #151515; }
.log button { gap: 9px; }
.cmd { width: 603px; padding-left: 21px; border-right: 3px solid #151515; gap: 18px; }
.cmd button svg:last-child { margin-left: 4px; }
.cmd input { width: 449px; height: 33px; box-sizing: border-box; background: #0f0f0f; border: 2px solid #2e2e2e; border-radius: 5px; padding: 0 10px; font: 18px/24px "DejaVu Sans Mono", monospace; }
.fill { flex: 1; }
.saved, .rev, .trace, .glass, .zen, .px { border-left: 3px solid #151515; }
.saved { width: 153px; padding-left: 16px; }
.rev { width: 250px; padding-left: 21px; }
.back .rev { width: 248px; }
.rev button { gap: 9px; }
.trace { width: 218px; padding-left: 23px; gap: 12px; }
.trace button:first-child { margin-right: 12px; gap: 5px; }
.glass { width: 70px; justify-content: center; padding-right: 7px; }
.zen { width: 211px; padding-left: 20px; }
.zen button { gap: 5px; }
.zen button svg:last-child { margin-left: 18px; }
.px { width: 87px; padding-left: 18px; gap: 23px; }
.behind { display: flex; height: 25px; flex: none; margin-bottom: 6px; background: #151515; }
.behind svg { flex: 1; min-width: 0; height: 25px; }
.rest { width: 677px; margin-left: 7px; background: #242424; }
.thick { fill: #3d3735; }
.thin { fill: #665d5a; }
</style>
